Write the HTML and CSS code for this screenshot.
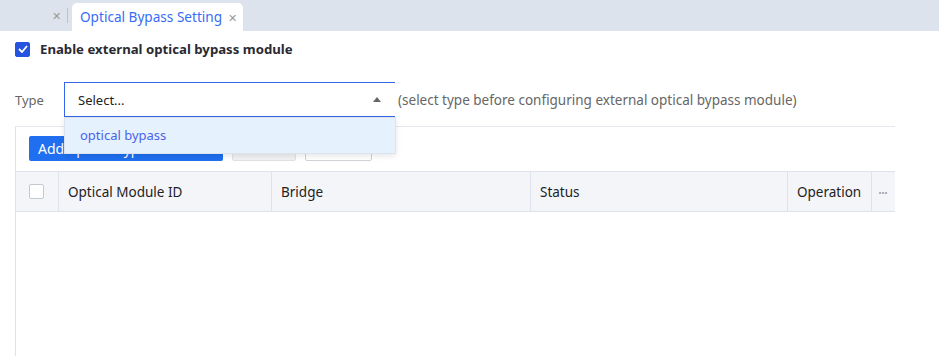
FILE: index.html
```html
<!DOCTYPE html>
<html lang="en">
<head>
    <meta charset="UTF-8">
    <title>Optical Bypass Setting</title>
    <link rel="stylesheet" href="styles.css">
</head>
<body>
    <div class="tabbar">
        <span class="tab-close ghost">&#x2715;</span>
        <span class="tab-sep"></span>
        <div class="tab active">Optical Bypass Setting <span class="tab-close">&#x2715;</span></div>
    </div>

    <div class="page">
        <label class="enable">
            <span class="check on">
                <svg width="10" height="8" viewBox="0 0 10 8"><path d="M1 4 L4 7 L9 1" fill="none" stroke="#fff" stroke-width="1.8"/></svg>
            </span>
            Enable external optical bypass module
        </label>

        <div class="type-row">
            <span class="type-label">Type</span>
            <div class="select">
                <span>Select...</span>
                <span class="caret"></span>
                <div class="menu">
                    <div class="menu-item">optical bypass</div>
                </div>
            </div>
            <span class="hint">(select type before configuring external optical bypass module)</span>
        </div>

        <div class="panel">
            <div class="toolbar">
                <button class="btn primary">Add optical bypass module</button>
                <button class="btn gray"></button>
                <button class="btn plain"></button>
            </div>
            <div class="table">
                <div class="thead">
                    <div class="cell c-check"><span class="check"></span></div>
                    <div class="cell c-id">Optical Module ID</div>
                    <div class="cell c-bridge">Bridge</div>
                    <div class="cell c-status">Status</div>
                    <div class="cell c-op">Operation</div>
                    <div class="cell c-more">&middot;&middot;&middot;</div>
                </div>
            </div>
        </div>
    </div>
</body>
</html>
```

FILE: styles.css
```css
* {
    box-sizing: border-box;
}
body {
    margin: 0;
    font-family: "Noto Sans", "Open Sans", sans-serif;
    font-size: 13px;
    color: #333;
    background: #fff;
    overflow: hidden;
}
.tabbar {
    height: 31px;
    background: #dde3ed;
    display: flex;
    align-items: flex-end;
    padding-left: 52px;
}
.tab-close {
    font-size: 11px;
    color: #999;
    margin-left: 2px;
}
.tab-close.ghost {
    align-self: center;
    margin-left: 0;
}
.tab-sep {
    width: 1px;
    height: 15px;
    background: #bbc2cc;
    align-self: center;
    margin: 0 4px 0 6px;
}
.tab {
    height: 28px;
    line-height: 28px;
    padding: 0 6px 0 8px;
    background: #fff;
    border-radius: 5px 5px 0 0;
    color: #3a6cf6;
    font-size: 13.6px;
}
.page {
    padding: 0 0 0 15px;
}
.enable {
    display: flex;
    align-items: center;
    height: 36px;
    font-weight: bold;
    font-size: 13.2px;
    color: #2a2a33;
    gap: 10px;
}
.check {
    width: 15px;
    height: 15px;
    border: 1px solid #c4c8d0;
    border-radius: 2px;
    background: #fff;
    display: inline-flex;
    align-items: center;
    justify-content: center;
}
.check.on {
    background: #2454e0;
    border-color: #2454e0;
}
.type-row {
    display: flex;
    align-items: center;
    margin-top: 15px;
    height: 35px;
}
.type-label {
    width: 49px;
    color: #666;
}
.select {
    position: relative;
    width: 331px;
    height: 35px;
    border: 1px solid #3565ea;
    border-right: none;
    display: flex;
    align-items: center;
    justify-content: space-between;
    padding: 0 14px 0 13px;
    color: #222;
}
.caret {
    width: 0;
    height: 0;
    border-left: 4px solid transparent;
    border-right: 4px solid transparent;
    border-bottom: 5px solid #666;
}
.menu {
    position: absolute;
    left: -1px;
    top: 34px;
    width: 332px;
    background: #e6f1fe;
    border: 1px solid #dde3ec;
    box-shadow: 0 2px 6px rgba(0, 0, 0, 0.1);
    z-index: 2;
}
.menu-item {
    height: 35px;
    line-height: 35px;
    padding-left: 15px;
    color: #4a64e8;
}
.hint {
    margin-left: 3px;
    color: #666;
    font-size: 13.5px;
}
.panel {
    margin-top: 9px;
    border-left: 1px solid #dfe2e8;
    border-top: 1px solid #e6e8ee;
    width: 880px;
    height: 240px;
}
.toolbar {
    display: flex;
    gap: 9px;
    padding: 9px 0 10px 13px;
}
.btn {
    height: 25px;
    border-radius: 2px;
    font-family: inherit;
    font-size: 14px;
    padding: 0 9px;
    white-space: nowrap;
    text-align: left;
    overflow: hidden;
}
.btn.primary {
    width: 194px;
    background: #1f6ff0;
    color: #fff;
    border: none;
}
.btn.gray {
    width: 64px;
    background: #f1f2f4;
    border: 1px solid #e0e2e6;
}
.btn.plain {
    width: 67px;
    background: #fff;
    border: 1px solid #d0d3d8;
}
.thead {
    display: flex;
    height: 41px;
    background: #f4f5f9;
    border-top: 1px solid #dfe2ea;
    border-bottom: 1px solid #dfe2ea;
    font-size: 13.5px;
}
.cell {
    display: flex;
    align-items: center;
    padding-left: 9px;
    border-right: 1px solid #dfe2ea;
    color: #222;
    white-space: nowrap;
}
.c-check {
    width: 43px;
    padding-left: 13px;
}
.c-id { width: 213px; }
.c-bridge { width: 259px; }
.c-status { width: 257px; }
.c-op { width: 84px; }
.c-more {
    width: 23px;
    padding-left: 6px;
    border-right: none;
    color: #999;
    font-size: 15px;
    letter-spacing: -1px;
}
```
